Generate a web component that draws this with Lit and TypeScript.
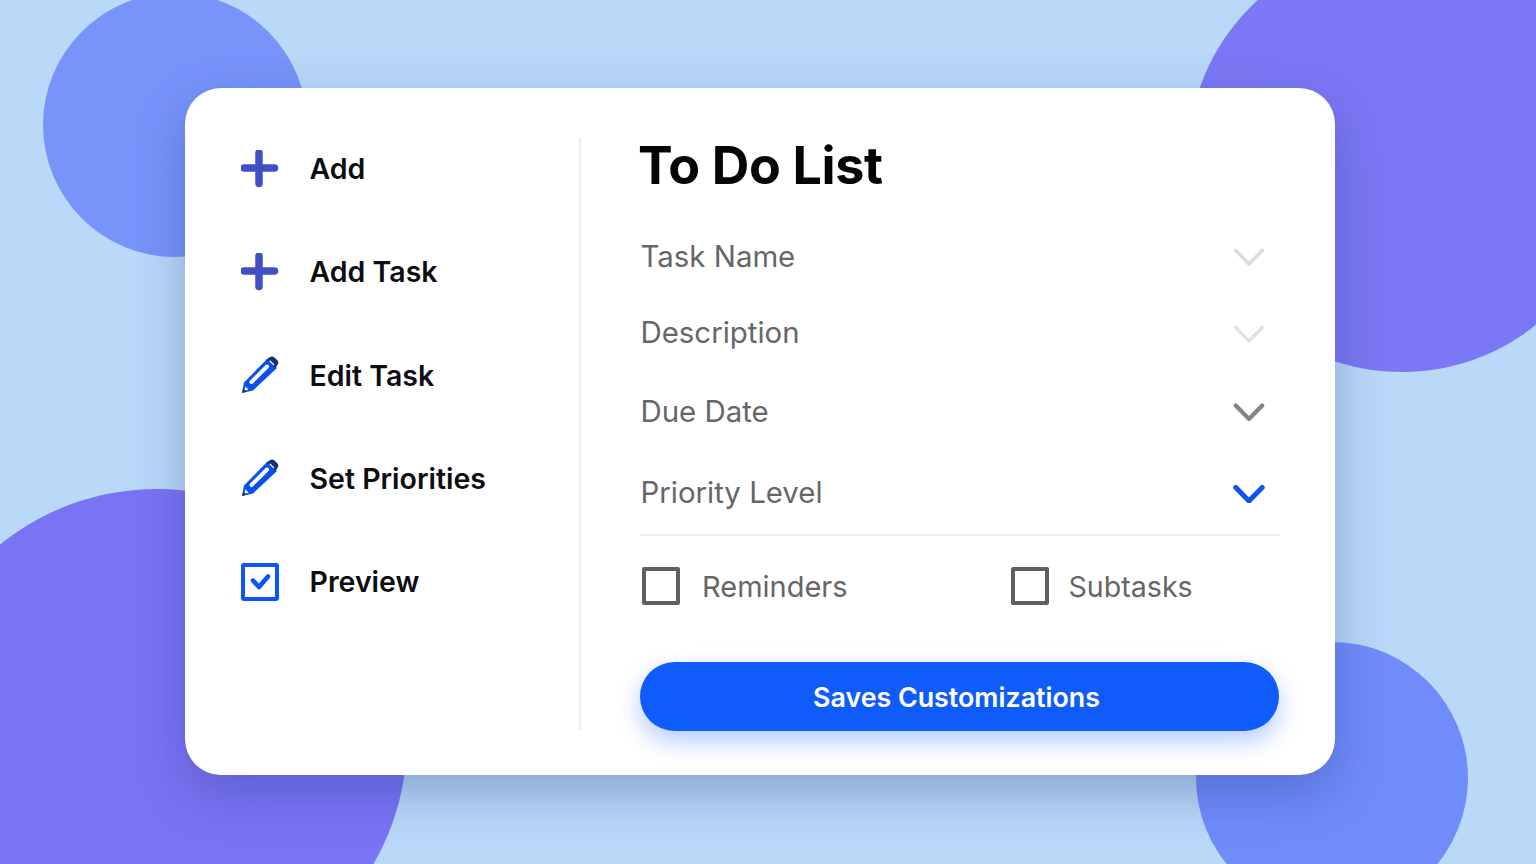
import { LitElement, html, css, svg } from "lit";
import { customElement } from "lit/decorators.js";

const plus = html`<svg class="ico" viewBox="0 0 38 38"><path d="M18 3V33.5M3 18H33.5" fill="none" stroke="#4150c2" stroke-width="7.5" stroke-linecap="round"/></svg>`;
const pencil = html`<svg class="ico" viewBox="0 0 38 38">
  <path d="M1 37 L3 26.5 L26 3 L36 12 L12 34.5 Z" fill="#0b50e8"/>
  <path d="M10.5 26 L26 10.5" stroke="#fff" stroke-width="4" stroke-linecap="round" fill="none"/>
  <path d="M4.5 30.5 L7.5 33.5 L3 35 Z" fill="#fff"/>
  <path d="M25.5 3.5 L29.5 0.8 Q31.5 -.2 33.5 1.4 L36.6 4.4 Q38.2 6.8 36.6 8.6 L34.5 12 Z" fill="#12307a"/>
  <path d="M28.6 4.8 L33 9" stroke="#e8eefc" stroke-width="1.4" fill="none"/>
  <path d="M1 37 L2.2 32.6 L5.4 35.8 Z" fill="#12307a"/>
</svg>`;
const check = html`<svg class="ico" viewBox="0 0 38 38"><rect x="2" y="2" width="34" height="34" rx="1" fill="#fff" stroke="#0b55f0" stroke-width="4"/><path d="M12 17.5 L18 24 L27 13.5" fill="none" stroke="#0b55f0" stroke-width="4.6" stroke-linecap="round" stroke-linejoin="round"/></svg>`;
const chev = (color: string, w: number) => svg`<svg class="chev" viewBox="0 0 32 20"><path d="M2.8 4.5 L16 18 L29.2 4.5" fill="none" stroke=${color} stroke-width=${w} stroke-linecap="round" stroke-linejoin="round"/></svg>`;

const nav = [
  ["Add", plus],
  ["Add Task", plus],
  ["Edit Task", pencil],
  ["Set Priorities", pencil],
  ["Preview", check],
] as const;

const fields: [string, string, number, string][] = [
  ["Task Name", "#dcdcdc", 3.6, "r1"],
  ["Description", "#e2e2e2", 3.6, "r2"],
  ["Due Date", "#858585", 4.2, "r3"],
  ["Priority Level", "#0b55f0", 5, "r4"],
];

@customElement("app-root")
export class AppRoot extends LitElement {
  static styles = css`
    :host {
      display: block;
      width: 1536px;
      height: 864px;
      font-family: Inter, "Liberation Sans", sans-serif;
    }
    .stage {
      position: relative;
      overflow: hidden;
      width: 1536px;
      height: 864px;
      box-sizing: border-box;
      padding: 88px 201px 89px 185px;
      background: #bad9f9;
    }
    .blob {
      position: absolute;
      border-radius: 50%;
    }
    .tl { left: 43px; top: -7px; width: 264px; height: 264px; background: #7794fb; }
    .tr { left: 1188px; top: -56px; width: 428px; height: 428px; background: #7c78f5; }
    .bl { left: -93px; top: 489px; width: 500px; height: 500px; background: #7a74f5; }
    .br { left: 1196px; top: 642px; width: 272px; height: 272px; background: #708cfb; }
    .card {
      position: relative;
      box-sizing: border-box;
      width: 1150px;
      height: 687px;
      background: #fff;
      border-radius: 36px;
      display: flex;
      padding: 50px 55px 45px 0;
      box-shadow: 0 18px 50px rgba(30, 50, 120, 0.32);
    }
    .side {
      box-sizing: border-box;
      width: 396px;
      flex: none;
      border-right: 2px solid #ededed;
      padding: 0 0 0 56px;
      display: grid;
      grid-auto-rows: 103.3px;
      align-content: start;
    }
    .item {
      display: flex;
      align-items: center;
      gap: 30.5px;
      font-size: 28.5px;
      font-weight: 560;
      color: #0d0d12;
      height: 61px;
    }
    .ico { width: 38px; height: 38px; flex: none; }
    .main {
      flex: 1;
      padding-left: 59px;
      display: flex;
      flex-direction: column;
    }
    .main > * { flex: none; }
    h1 {
      margin: 0 0 0 -2px;
      font-size: 52px;
      line-height: 56px;
      font-weight: 700;
      color: #050508;
      letter-spacing: -0.35px;
    }
    .row {
      display: flex;
      align-items: center;
      justify-content: space-between;
      padding: 0 15px 0 0.5px;
      font-size: 29.4px;
      color: #66666a;
    }
    .r1 { height: 76px; margin-top: 24px; }
    .r2 { height: 77px; }
    .r3 { height: 80px; }
    .r4 { height: 83px; }
    .chev { width: 32px; height: 20px; flex: none; }
    .rule { height: 2px; background: #eeeeee; }
    .checks {
      display: flex;
      padding: 31px 0 0 2px;
      font-size: 29px;
      color: #66666a;
    }
    .cb {
      display: flex;
      align-items: center;
      gap: 22px;
      height: 38px;
    }
    .cb:first-child { width: 369px; }
    .cb:last-child { gap: 19.5px; font-size: 28.6px; }
    .box {
      box-sizing: border-box;
      width: 38px;
      height: 38px;
      border: 4px solid #606063;
      border-radius: 2px;
    }
    button {
      margin-top: 57px;
      height: 69px;
      width: 639px;
      border: 0;
      border-radius: 35px;
      background: #0f5cfa;
      color: #fff;
      font: 600 26.8px Inter, "Liberation Sans", sans-serif;
      box-shadow: 0 10px 24px rgba(15, 92, 250, 0.32);
      padding: 0 6px 0 0;
    }
  `;

  render() {
    return html`<div class="stage">
      <div class="blob tl"></div>
      <div class="blob tr"></div>
      <div class="blob bl"></div>
      <div class="blob br"></div>
      <div class="card">
        <nav class="side">
          ${nav.map(([t, i]) => html`<div class="item">${i}<span>${t}</span></div>`)}
        </nav>
        <section class="main">
          <h1>To Do List</h1>
          ${fields.map(([t, c, w, k]) => html`<div class="row ${k}"><span>${t}</span>${chev(c, w)}</div>`)}
          <div class="rule"></div>
          <div class="checks">
            <label class="cb"><span class="box"></span>Reminders</label>
            <label class="cb"><span class="box"></span>Subtasks</label>
          </div>
          <button>Saves Customizations</button>
        </section>
      </div>
    </div>`;
  }
}
